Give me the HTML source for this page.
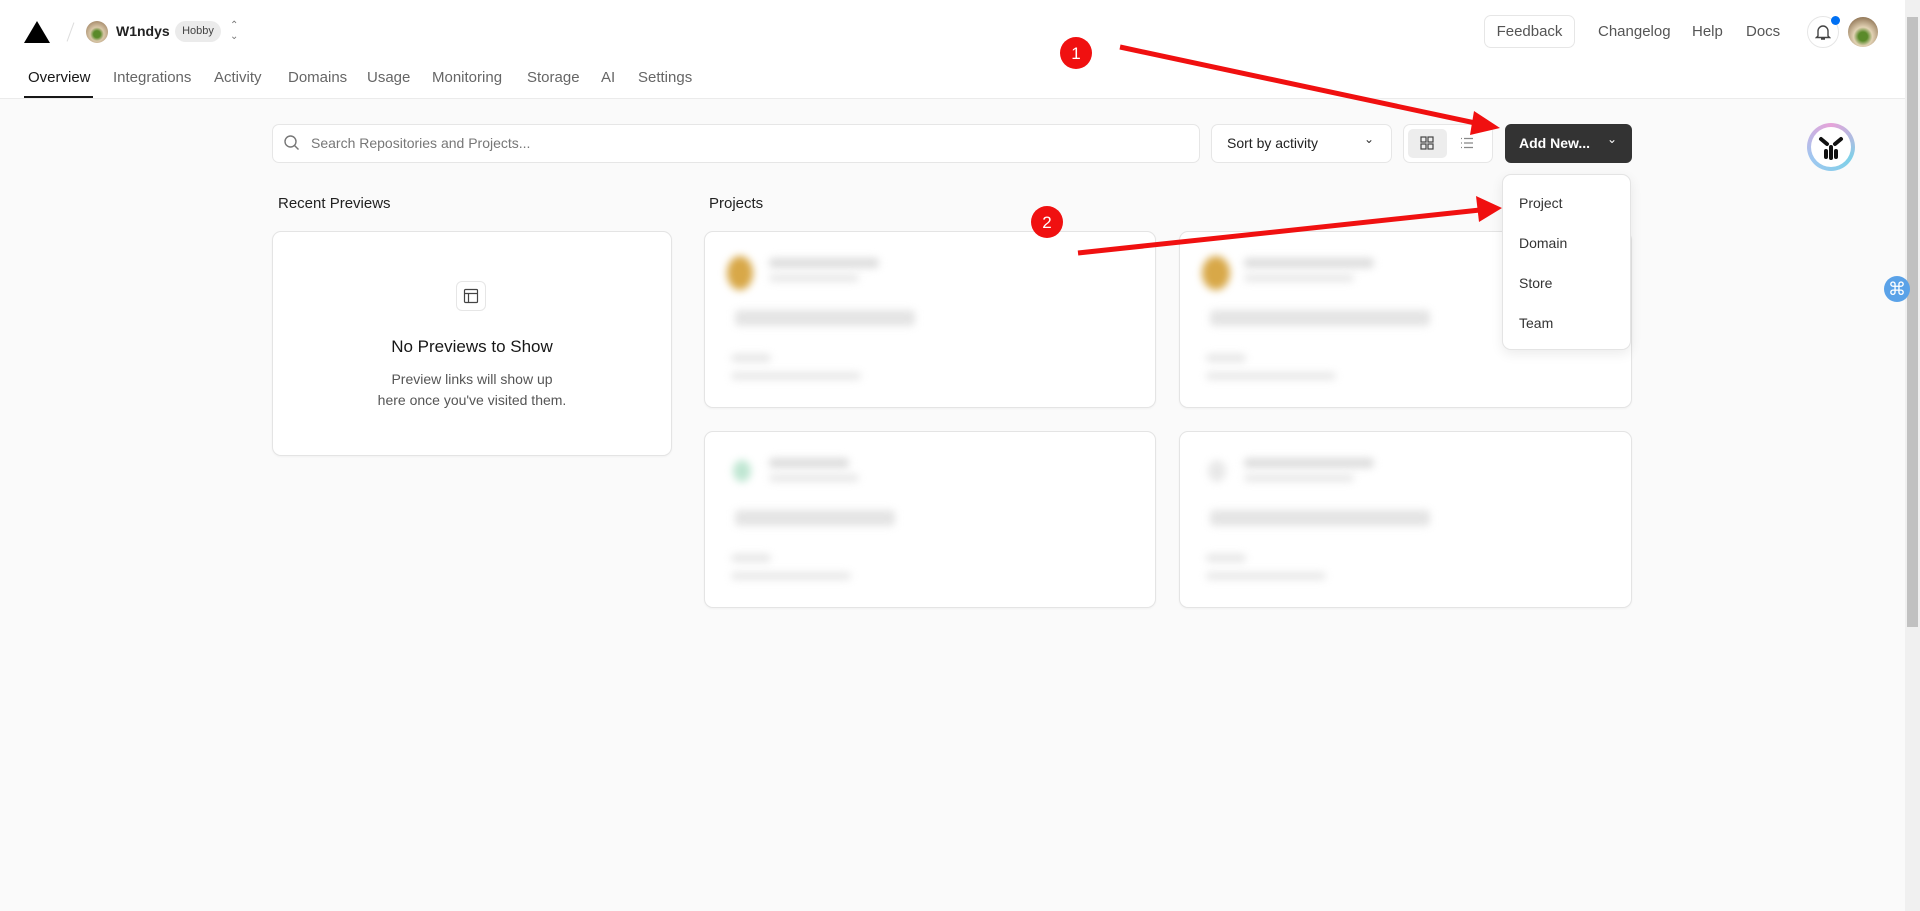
<!DOCTYPE html>
<html><head><meta charset="utf-8"><style>
*{box-sizing:border-box;margin:0;padding:0}
body{width:1920px;height:911px;overflow:hidden;background:#fafafa;font-family:"Liberation Sans",sans-serif;color:#171717;position:relative}
.hdr{position:absolute;left:0;top:0;width:1905px;height:99px;background:#fff;border-bottom:1px solid #ebebeb}
.abs{position:absolute}
.tab{position:absolute;top:69px;font-size:15px;color:#666}
.btn{position:absolute;background:#fff;border:1px solid #e6e6e6;border-radius:7px}
.card{position:absolute;background:#fff;border:1px solid #e4e4e4;border-radius:9px;box-shadow:0 1px 2px rgba(0,0,0,.04)}
.bl{position:absolute;filter:blur(4px);background:#ddd;border-radius:4px}
.mi{position:absolute;left:16px;font-size:14px;color:#333}
</style></head><body>
<div class="hdr"></div>
<svg class="abs" style="left:24px;top:21px" width="26" height="22"><polygon points="13,0 26,22 0,22" fill="#000"/></svg>
<div class="abs" style="left:70px;top:22px;width:1px;height:20px;background:#ddd;transform:rotate(20deg)"></div>
<div class="abs" style="left:86px;top:21px;width:22px;height:22px;border-radius:50%;background:radial-gradient(circle at 50% 60%,#5a8a2a 20%,#d9c7a8 40%,#8a6a4a 100%)"></div>
<div class="abs" style="left:116px;top:23px;font-size:14px;font-weight:bold;color:#222">W1ndys</div>
<div class="abs" style="left:175px;top:21px;width:46px;height:21px;border-radius:11px;background:#ebebeb;font-size:11px;color:#444;text-align:center;line-height:21px">Hobby</div>
<div class="abs" style="left:230px;top:20px;font-size:10px;color:#777;line-height:11px">⌃<br>⌄</div>
<div class="tab" style="left:28px;color:#171717">Overview</div>
<div class="abs" style="left:24px;top:96px;width:69px;height:2px;background:#171717"></div>
<div class="tab" style="left:113px">Integrations</div>
<div class="tab" style="left:214px">Activity</div>
<div class="tab" style="left:288px">Domains</div>
<div class="tab" style="left:367px">Usage</div>
<div class="tab" style="left:432px">Monitoring</div>
<div class="tab" style="left:527px">Storage</div>
<div class="tab" style="left:601px">AI</div>
<div class="tab" style="left:638px">Settings</div>
<div class="btn" style="left:1484px;top:15px;width:91px;height:33px;font-size:15px;color:#555;text-align:center;line-height:31px">Feedback</div>
<div class="abs" style="left:1598px;top:23px;font-size:15px;color:#555">Changelog</div>
<div class="abs" style="left:1692px;top:23px;font-size:15px;color:#555">Help</div>
<div class="abs" style="left:1746px;top:23px;font-size:15px;color:#555">Docs</div>
<div class="abs" style="left:1807px;top:16px;width:32px;height:32px;border-radius:50%;border:1px solid #e6e6e6;background:#fff"></div>
<svg class="abs" style="left:1815px;top:23px" width="16" height="18" viewBox="0 0 16 18"><path d="M3 13V8a5 5 0 0 1 10 0v5l1.5 1.5h-13z M6 16h4" fill="none" stroke="#444" stroke-width="1.4"/></svg>
<div class="abs" style="left:1831px;top:16px;width:9px;height:9px;border-radius:50%;background:#0070f3"></div>
<div class="abs" style="left:1848px;top:17px;width:30px;height:30px;border-radius:50%;background:radial-gradient(circle at 50% 65%,#5a8a2a 18%,#e2d2b4 38%,#6a4a2a 100%)"></div>
<div class="abs" style="left:1905px;top:0;width:15px;height:911px;background:#f0f0f0"></div>
<div class="abs" style="left:1907px;top:17px;width:11px;height:610px;background:#c1c1c1"></div>

<div class="btn" style="left:272px;top:124px;width:928px;height:39px"></div>
<svg class="abs" style="left:283px;top:134px" width="18" height="18"><circle cx="7.5" cy="7.5" r="5.5" fill="none" stroke="#777" stroke-width="1.4"/><path d="M11.5 11.5l4 4" stroke="#777" stroke-width="1.4"/></svg>
<div class="abs" style="left:311px;top:135px;font-size:14px;color:#777">Search Repositories and Projects...</div>
<div class="btn" style="left:1211px;top:124px;width:181px;height:39px"></div>
<div class="abs" style="left:1227px;top:135px;font-size:14px;color:#222">Sort by activity</div>
<div class="abs" style="left:1364px;top:132px;font-size:12px;color:#333">⌄</div>
<div class="btn" style="left:1403px;top:124px;width:90px;height:39px"></div>
<div class="abs" style="left:1408px;top:129px;width:39px;height:29px;background:#ededed;border-radius:5px"></div>
<svg class="abs" style="left:1420px;top:136px" width="14" height="14"><g fill="none" stroke="#444" stroke-width="1.2"><rect x="1" y="1" width="5" height="5"/><rect x="8" y="1" width="5" height="5"/><rect x="1" y="8" width="5" height="5"/><rect x="8" y="8" width="5" height="5"/></g></svg>
<svg class="abs" style="left:1460px;top:137px" width="14" height="12"><g stroke="#888" stroke-width="1.2"><path d="M1 1.5h1M4 1.5h9M1 6h1M4 6h9M1 10.5h1M4 10.5h9"/></g></svg>
<div class="abs" style="left:1505px;top:124px;width:127px;height:39px;background:#333;border-radius:6px"></div>
<div class="abs" style="left:1519px;top:135px;font-size:14px;font-weight:bold;color:#fff">Add New...</div>
<div class="abs" style="left:1607px;top:132px;font-size:12px;color:#fff">⌄</div>

<div class="abs" style="left:1807px;top:123px;width:48px;height:48px;border-radius:50%;background:conic-gradient(#e7a3d9,#7fd0e8,#9fc7f0,#e7a3d9);"></div>
<div class="abs" style="left:1811px;top:127px;width:40px;height:40px;border-radius:50%;background:#fff"></div>
<svg class="abs" style="left:1817px;top:133px" width="28" height="28" viewBox="0 0 28 28"><g fill="none" stroke="#111" stroke-width="4" stroke-linecap="round"><path d="M4 6l6 5M24 6l-6 5M14 14v11M9 18v6M19 18v6"/></g></svg>
<div class="abs" style="left:1884px;top:276px;width:26px;height:26px;border-radius:50%;background:#5aa2e8;color:#fff;font-size:18px;text-align:center;line-height:26px">⌘</div>

<div class="abs" style="left:278px;top:195px;font-size:15px;color:#222">Recent Previews</div>
<div class="abs" style="left:709px;top:195px;font-size:15px;color:#222">Projects</div>
<div class="card" style="left:272px;top:231px;width:400px;height:225px"></div>
<div class="abs" style="left:456px;top:281px;width:30px;height:30px;border:1px solid #e6e6e6;border-radius:6px;background:#fff"></div>
<svg class="abs" style="left:463px;top:288px" width="16" height="16"><g fill="none" stroke="#444" stroke-width="1.2"><rect x="1.5" y="1.5" width="13" height="13" rx="1"/><path d="M1.5 5.5h13M5.5 5.5v9"/></g></svg>
<div class="abs" style="left:272px;top:337px;width:400px;text-align:center;font-size:17px;color:#171717">No Previews to Show</div>
<div class="abs" style="left:272px;top:369px;width:400px;text-align:center;font-size:14px;line-height:21px;color:#555">Preview links will show up<br>here once you've visited them.</div>

<div class="card" style="left:704px;top:231px;width:452px;height:177px"><div class="bl" style="left:22px;top:24px;width:26px;height:34px;background:#d8a848;border-radius:50%"></div><div class="bl" style="left:64px;top:26px;width:110px;height:10px"></div><div class="bl" style="left:64px;top:42px;width:90px;height:8px;background:#e8e8e8"></div><div class="bl" style="left:30px;top:78px;width:180px;height:16px;background:#e4e4e4"></div><div class="bl" style="left:26px;top:122px;width:40px;height:8px;background:#e6e6e6"></div><div class="bl" style="left:26px;top:140px;width:130px;height:8px;background:#e8e8e8"></div></div>
<div class="card" style="left:1179px;top:231px;width:453px;height:177px"><div class="bl" style="left:22px;top:24px;width:28px;height:34px;background:#d8a848;border-radius:50%"></div><div class="bl" style="left:64px;top:26px;width:130px;height:10px"></div><div class="bl" style="left:64px;top:42px;width:110px;height:8px;background:#e8e8e8"></div><div class="bl" style="left:30px;top:78px;width:220px;height:16px;background:#e4e4e4"></div><div class="bl" style="left:26px;top:122px;width:40px;height:8px;background:#e6e6e6"></div><div class="bl" style="left:26px;top:140px;width:130px;height:8px;background:#e8e8e8"></div></div>
<div class="card" style="left:704px;top:431px;width:452px;height:177px"><div class="bl" style="left:28px;top:28px;width:18px;height:22px;background:#bfe6d2;border-radius:50%"></div><div class="bl" style="left:64px;top:26px;width:80px;height:10px"></div><div class="bl" style="left:64px;top:42px;width:90px;height:8px;background:#e8e8e8"></div><div class="bl" style="left:30px;top:78px;width:160px;height:16px;background:#e4e4e4"></div><div class="bl" style="left:26px;top:122px;width:40px;height:8px;background:#e6e6e6"></div><div class="bl" style="left:26px;top:140px;width:120px;height:8px;background:#e8e8e8"></div></div>
<div class="card" style="left:1179px;top:431px;width:453px;height:177px"><div class="bl" style="left:28px;top:28px;width:18px;height:22px;background:#e8e8e8;border-radius:50%"></div><div class="bl" style="left:64px;top:26px;width:130px;height:10px"></div><div class="bl" style="left:64px;top:42px;width:110px;height:8px;background:#e8e8e8"></div><div class="bl" style="left:30px;top:78px;width:220px;height:16px;background:#e4e4e4"></div><div class="bl" style="left:26px;top:122px;width:40px;height:8px;background:#e6e6e6"></div><div class="bl" style="left:26px;top:140px;width:120px;height:8px;background:#e8e8e8"></div></div>

<div class="card" style="left:1502px;top:174px;width:129px;height:176px;box-shadow:0 4px 12px rgba(0,0,0,.08);z-index:5">
<div class="mi" style="top:20px">Project</div><div class="mi" style="top:60px">Domain</div><div class="mi" style="top:100px">Store</div><div class="mi" style="top:140px">Team</div></div>

<svg class="abs" style="left:0;top:0;z-index:6" width="1920" height="911">
<g stroke="#f01010" stroke-width="5" fill="#f01010">
<line x1="1120" y1="47" x2="1480" y2="124"/><polygon points="1500,128 1474,111 1470,135" stroke="none"/>
<line x1="1078" y1="253" x2="1480" y2="210"/><polygon points="1502,208 1476,196 1479,222" stroke="none"/>
</g>
<circle cx="1076" cy="53" r="16" fill="#f01010"/><text x="1076" y="59" text-anchor="middle" font-size="17" fill="#fff" font-family="Liberation Sans">1</text>
<circle cx="1047" cy="222" r="16" fill="#f01010"/><text x="1047" y="228" text-anchor="middle" font-size="17" fill="#fff" font-family="Liberation Sans">2</text>
</svg>
</body></html>
